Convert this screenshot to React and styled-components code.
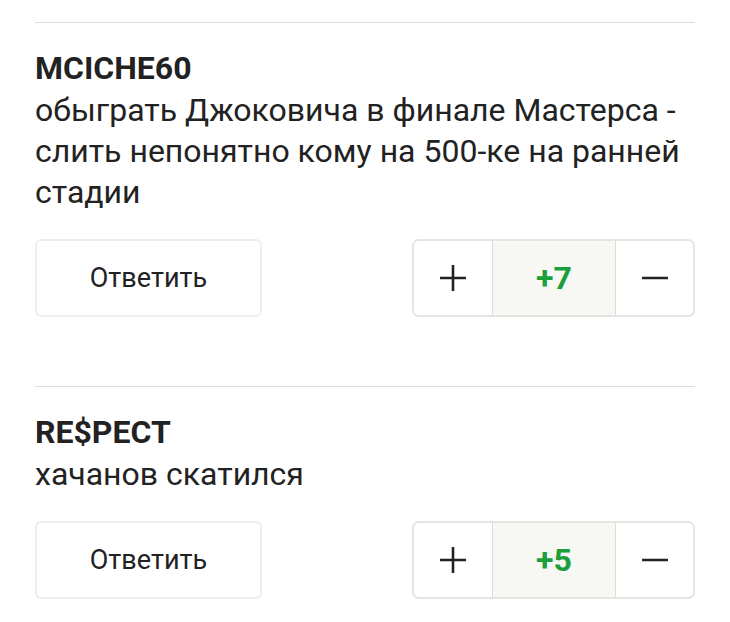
import React from 'react';
import styled, { createGlobalStyle } from 'styled-components';

const GlobalStyle = createGlobalStyle`
  body {
    margin: 0;
    background: #fff;
    font-family: Roboto, "Noto Sans", sans-serif;
    color: #222;
  }
`;

const List = styled.div`
  padding: 22px 35px 0;
`;

const Comment = styled.div`
  border-top: 1px solid #dcdcd8;
  padding: 23px 0 69px;
`;

const Author = styled.div`
  font-size: 32px;
  font-weight: 700;
  line-height: 44px;
  color: #222;
`;

const Text = styled.div`
  font-size: 32px;
  line-height: 41px;
  color: #222;
`;

const Actions = styled.div`
  display: flex;
  justify-content: space-between;
  margin-top: 26px;
`;

const ReplyButton = styled.button`
  width: 227px;
  height: 78px;
  border: 2px solid #eeeeea;
  border-radius: 6px;
  background: #fff;
  font-family: inherit;
  font-size: 27px;
  color: #222;
  padding: 0;
`;

const Votes = styled.div`
  display: flex;
  height: 78px;
  border: 2px solid #e4e4e0;
  border-radius: 7px;
  overflow: hidden;
  box-sizing: border-box;
`;

const VoteButton = styled.button`
  width: ${p => p.$w}px;
  border: none;
  background: #fff;
  display: flex;
  align-items: center;
  justify-content: center;
  padding: 0;
`;

const Score = styled.div`
  width: 122px;
  border-left: 1px solid #dcdcd6;
  border-right: 1px solid #dcdcd6;
  background: #f7f7f3;
  display: flex;
  align-items: center;
  justify-content: center;
  font-size: 32px;
  font-weight: 700;
  color: #1a9f3c;
`;

const Plus = () => (
  <svg width="28" height="28" viewBox="0 0 28 28">
    <path d="M14 1v26M1 14h26" stroke="#222" strokeWidth="2.6" />
  </svg>
);

const Minus = () => (
  <svg width="28" height="28" viewBox="0 0 28 28">
    <path d="M1 14h26" stroke="#222" strokeWidth="2.6" />
  </svg>
);

const comments = [
  {
    author: 'MCICHE60',
    text: 'обыграть Джоковича в финале Мастерса - слить непонятно кому на 500-ке на ранней стадии',
    score: '+7',
  },
  {
    author: 'RE$PECT',
    text: 'хачанов скатился',
    score: '+5',
  },
];

export default function App() {
  return (
    <List>
      <GlobalStyle />
      {comments.map((c, i) => (
        <Comment key={i}>
          <Author>{c.author}</Author>
          <Text>{c.text}</Text>
          <Actions>
            <ReplyButton>Ответить</ReplyButton>
            <Votes>
              <VoteButton $w={78}><Plus /></VoteButton>
              <Score>{c.score}</Score>
              <VoteButton $w={77}><Minus /></VoteButton>
            </Votes>
          </Actions>
        </Comment>
      ))}
    </List>
  );
}
